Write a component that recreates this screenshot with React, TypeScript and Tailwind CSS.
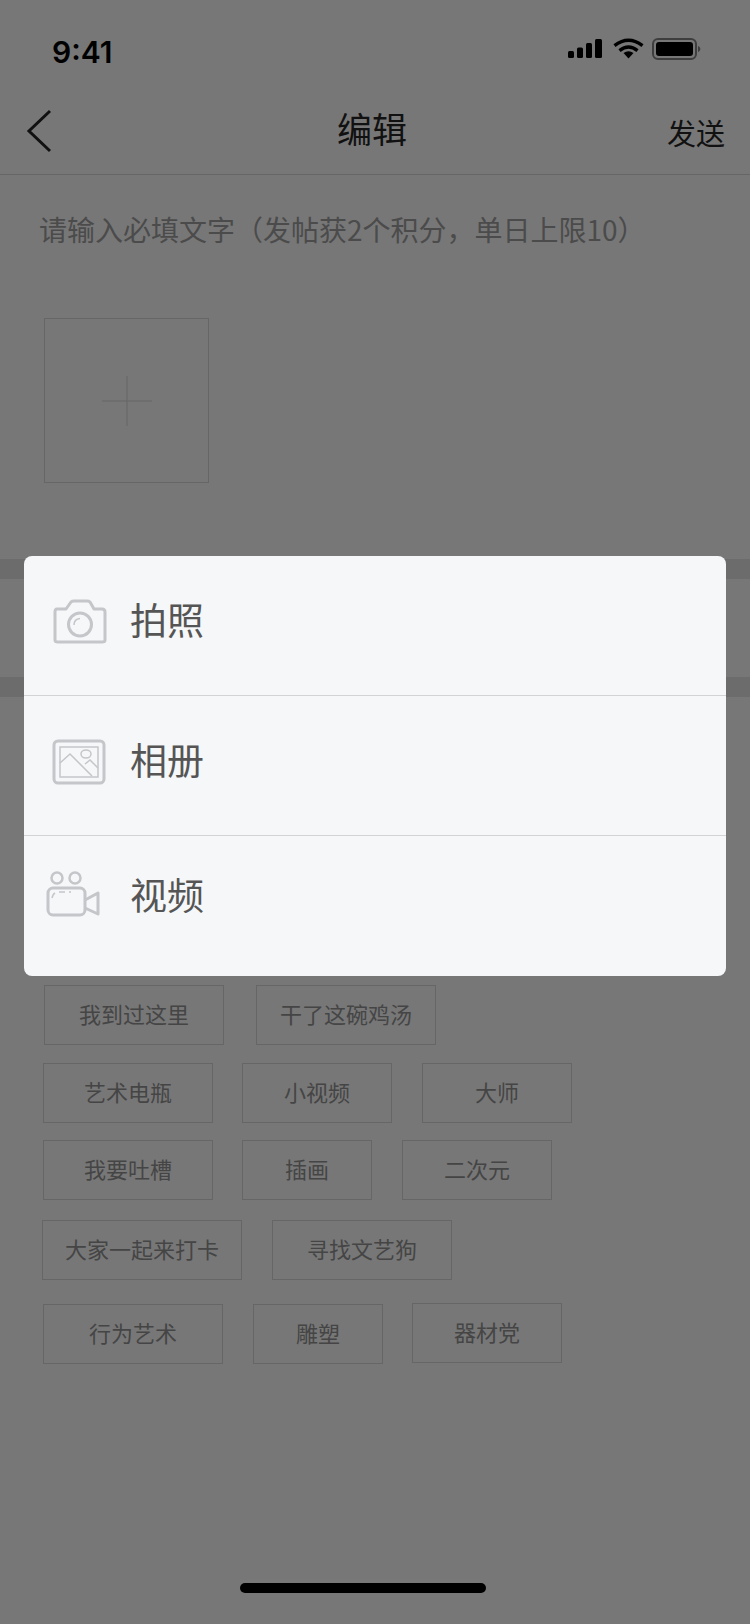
const cjk = "font-['Noto_Sans_CJK_SC','Noto_Sans',sans-serif]";

function Tag({ label, w, cls = "" }: { label: string; w: string; cls?: string }) {
  return (
    <div className={`${w} ${cls} h-[60px] shrink-0 flex items-center justify-center border border-[#666666] pb-[4px] text-[22px] leading-none text-[#454545]`}>
      {label}
    </div>
  );
}

function StatusIcons() {
  return (
    <svg width="134" height="22" viewBox="0 0 134 22" className="block">
      <g fill="#000">
        <rect x="0" y="13" width="6" height="7" rx="1.5" />
        <rect x="9" y="9.5" width="6" height="10.5" rx="1.5" />
        <rect x="18" y="5" width="6" height="15" rx="1.5" />
        <rect x="27" y="1" width="7" height="19" rx="1.5" />
        <path d="M55.5 15 L60.5 20.5 L65.5 15 Q60.5 11.5 55.5 15 Z" />
        <rect x="88" y="4" width="37" height="14" rx="3" />
        <path d="M130 8 C131.5 8.5 132.3 9.6 132.3 11 C132.3 12.4 131.5 13.5 130 14 Z" fill="#3e3e3e" />
      </g>
      <g fill="none" stroke="#000" strokeWidth="3.4">
        <path d="M46.5 7.6 Q60.5 -3 74.5 7.6" />
        <path d="M51.5 12.6 Q60.5 5.4 69.5 12.6" />
      </g>
      <rect x="85" y="1" width="43" height="20" rx="5" fill="none" stroke="#3e3e3e" strokeWidth="2" />
    </svg>
  );
}

function CameraIcon() {
  return (
    <svg width="54" height="45" viewBox="0 0 54 45" fill="none" stroke="#c4c6c9" strokeWidth="3" className="block">
      <path d="M4 10 H13 L18 3 Q19 2 21 2 H34 Q36 2 37 3 L41 10 H49 Q52 10 52 13 V41 Q52 43 49 43 H5 Q2 43 2 41 V13 Q2 10 4 10 Z" strokeLinejoin="round" />
      <circle cx="27" cy="25.5" r="11.5" />
      <path d="M21 26 Q21 20 27 19.5" strokeWidth="1.5" />
    </svg>
  );
}

function PictureIcon() {
  return (
    <svg width="54" height="46" viewBox="0 0 54 46" fill="none" stroke="#c4c6c9" className="block">
      <rect x="2" y="2" width="50" height="42" rx="4" strokeWidth="3" />
      <rect x="8" y="8" width="38" height="30" strokeWidth="1.5" />
      <path d="M8 24 L18 15 L40 37 M33 25 L38 21 L46 29" strokeWidth="1.5" />
      <ellipse cx="34" cy="15" rx="5" ry="4" strokeWidth="1.5" />
    </svg>
  );
}

function VideoIcon() {
  return (
    <svg width="54" height="46" viewBox="0 0 54 46" fill="none" stroke="#c4c6c9" className="block">
      <circle cx="11" cy="7" r="5.5" strokeWidth="2.5" />
      <circle cx="29" cy="7" r="5.5" strokeWidth="2.5" />
      <rect x="2" y="17" width="37" height="27" rx="5" strokeWidth="3" />
      <path d="M39 29 L52 22 V43 L39 37" strokeWidth="3" strokeLinejoin="round" />
      <path d="M6 27 Q7 23 9 22 M13 21 H19 M23 21 H25" strokeWidth="1.5" />
    </svg>
  );
}

export default function App() {
  return (
    <div className={`${cjk} relative w-[750px] h-[1624px] overflow-hidden bg-[#777777] flex flex-col`}>
      {/* status bar */}
      <div className="h-[90px] shrink-0 flex items-start justify-between pl-[52px] pr-[48px]">
        <span className="mt-[37px] text-[30px] leading-[30px] font-semibold text-black font-['Inter',sans-serif]">9:41</span>
        <div className="mt-[38px]"><StatusIcons /></div>
      </div>
      {/* nav */}
      <div className="relative h-[85px] shrink-0 flex items-start justify-between border-b border-[#666666] pl-[26px] pr-[25px]">
        <svg width="26" height="44" viewBox="0 0 26 44" fill="none" stroke="#111" strokeWidth="3" className="mt-[19px] block">
          <path d="M24 2 L3 22 L24 42" />
        </svg>
        <span className="absolute left-0 right-[6px] top-[20px] text-center text-[35px] leading-none text-[#111111]">编辑</span>
        <span className="mt-[28px] text-[29px] leading-none text-[#111111]">发送</span>
      </div>
      {/* input */}
      <div className="h-[143px] shrink-0 pl-[39px] pt-[40px] text-[28px] leading-none text-[#4b4b4b]">
        请输入必填文字（发帖获2个积分，单日上限10）
      </div>
      {/* add picture */}
      <div className="ml-[44px] w-[165px] h-[165px] shrink-0 border border-[#666666] flex items-center justify-center">
        <svg width="50" height="50" viewBox="0 0 50 50" stroke="#666666" strokeWidth="1" className="block"><path d="M0 25 H50 M25 0 V50" /></svg>
      </div>
      {/* bands */}
      <div className="mt-[76px] h-[20px] shrink-0 bg-[#6c6c6c]" />
      <div className="h-[98px] shrink-0" />
      <div className="h-[20px] shrink-0 bg-[#6c6c6c]" />
      {/* tags */}
      <div className="mt-[288px] flex flex-col shrink-0">
        <div className="flex ml-[44px] gap-[32px]">
          <Tag label="我到过这里" w="w-[180px]" />
          <Tag label="干了这碗鸡汤" w="w-[180px]" />
        </div>
        <div className="flex ml-[43px] mt-[18px]">
          <Tag label="艺术电瓶" w="w-[170px]" />
          <Tag label="小视频" w="w-[150px]" cls="ml-[29px]" />
          <Tag label="大师" w="w-[150px]" cls="ml-[30px]" />
        </div>
        <div className="flex ml-[43px] mt-[17px]">
          <Tag label="我要吐槽" w="w-[170px]" />
          <Tag label="插画" w="w-[130px]" cls="ml-[29px]" />
          <Tag label="二次元" w="w-[150px]" cls="ml-[30px]" />
        </div>
        <div className="flex ml-[42px] mt-[20px] gap-[30px]">
          <Tag label="大家一起来打卡" w="w-[200px]" />
          <Tag label="寻找文艺狗" w="w-[180px]" />
        </div>
        <div className="flex items-start ml-[43px] mt-[24px]">
          <Tag label="行为艺术" w="w-[180px]" />
          <Tag label="雕塑" w="w-[130px]" cls="ml-[30px]" />
          <Tag label="器材党" w="w-[150px]" cls="ml-[29px] -mt-px" />
        </div>
      </div>
      {/* home indicator */}
      <div className="absolute left-[240px] top-[1583px] w-[246px] h-[10px] rounded-full bg-black" />
      {/* sheet */}
      <div className="absolute left-[24px] top-[556px] w-[702px] h-[420px] rounded-[8px] bg-[#f6f7f9] flex flex-col">
        <div className="relative h-[140px] border-b border-[#d2d3d5] shrink-0">
          <div className="absolute left-[29px] top-[43px]"><CameraIcon /></div>
          <span className="absolute left-[106px] top-[45px] text-[37px] leading-[37px] text-[#555555]">拍照</span>
        </div>
        <div className="relative h-[140px] border-b border-[#d2d3d5] shrink-0">
          <div className="absolute left-[28px] top-[43px]"><PictureIcon /></div>
          <span className="absolute left-[106px] top-[45px] text-[37px] leading-[37px] text-[#555555]">相册</span>
        </div>
        <div className="relative flex-1">
          <div className="absolute left-[22px] top-[35px]"><VideoIcon /></div>
          <span className="absolute left-[106px] top-[40px] text-[37px] leading-[37px] text-[#555555]">视频</span>
        </div>
      </div>
    </div>
  );
}
